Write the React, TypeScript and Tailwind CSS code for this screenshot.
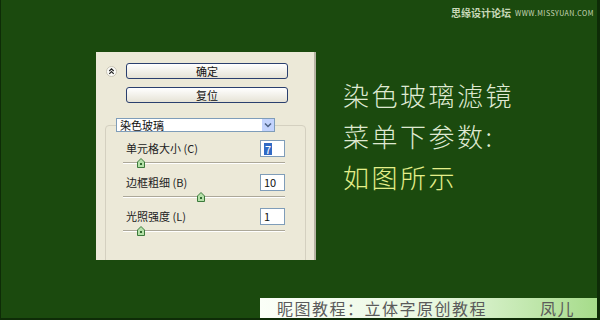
import React from "react"

const cjk = { fontFamily: '"Noto Sans CJK SC", "Noto Sans", sans-serif' }

function Slider({ pos }: { pos: number }) {
  return (
    <div className="relative h-[17px] pl-[17px] pr-[20px]">
      <div className="mt-[5px] h-[2px] border-t border-[#aca899] border-b border-b-white" />
      <svg
        className="absolute top-[1px]"
        style={{ left: 17 + pos - 4 }}
        width="8"
        height="10"
        viewBox="0 0 8 10"
      >
        <polygon points="4,0.5 7.5,4 7.5,9.5 0.5,9.5 0.5,4" fill="#b4e0a8" stroke="#3c7a3c" strokeWidth="1" />
        <rect x="3" y="5" width="2" height="2" fill="#2f6a2f" />
      </svg>
    </div>
  )
}

function ParamRow({ label, value, pos, selected }: { label: string; value: string; pos: number; selected?: boolean }) {
  return (
    <div className="flex flex-col">
      <div className="flex h-[17px] items-center justify-between pl-[20px] pr-[20px]">
        <span className="text-[11px] leading-none text-[#222]">{label}</span>
        <div className="flex h-[17px] w-[25px] items-center border border-[#7f9db9] bg-white pl-[3px]">
          {selected ? (
            <span className="bg-[#316ac5] px-[1px] text-[11px] leading-[12px] text-white">{value}</span>
          ) : (
            <span className="text-[11px] leading-none text-[#111]">{value}</span>
          )}
        </div>
      </div>
      <Slider pos={pos} />
    </div>
  )
}

function XpButton({ text }: { text: string }) {
  return (
    <div className="flex h-[16px] w-[162px] items-center justify-center rounded-[3px] border border-[#2a3f6e] bg-gradient-to-b from-white to-[#e6e3d6] text-[11px] leading-none text-[#111]">
      {text}
    </div>
  )
}

function Dialog() {
  return (
    <div className="flex h-[208px] w-[220px] flex-col overflow-hidden" style={cjk}>
      <div className="h-[5px] bg-gradient-to-b from-[#3d7bf0] to-[#1c56d0]" />
      <div className="flex-1 border-r-2 border-[#b7b4a4] bg-[#ece9d8]">
        <div className="mt-[11px] flex items-center pl-[10px]">
          <svg width="11" height="11" viewBox="0 0 11 11" className="mr-[9px]">
            <circle cx="5.5" cy="5.5" r="5" fill="#fbfbf7" stroke="#c8c4b4" />
            <path d="M3.3 5 L5.5 2.8 L7.7 5 M3.3 7.8 L5.5 5.6 L7.7 7.8" fill="none" stroke="#222" strokeWidth="1.2" />
          </svg>
          <XpButton text="确定" />
        </div>
        <div className="ml-[30px] mt-[8px]">
          <XpButton text="复位" />
        </div>
        <fieldset className="ml-[9px] mt-[15px] h-[160px] w-[201px] rounded-[4px] border border-[#d4d0c0]">
          <legend className="ml-[10px] p-0">
            <div className="flex h-[14px] w-[159px] items-center justify-between border border-[#7f9db9] bg-white">
              <span className="pl-[3px] text-[11px] leading-none text-[#111]">染色玻璃</span>
              <div className="flex h-[12px] w-[12px] items-center justify-center bg-[#c3d3fd]">
                <svg width="8" height="6" viewBox="0 0 8 6">
                  <path d="M1 1.5 L4 4.5 L7 1.5" fill="none" stroke="#4d6185" strokeWidth="1.5" />
                </svg>
              </div>
            </div>
          </legend>
          <div className="mt-[8px] flex flex-col">
            <ParamRow label="单元格大小 (C)" value="7" pos={18} selected />
            <ParamRow label="边框粗细 (B)" value="10" pos={78} />
            <ParamRow label="光照强度 (L)" value="1" pos={18} />
          </div>
        </fieldset>
      </div>
    </div>
  )
}

export default function App() {
  return (
    <div
      className="relative flex h-[320px] w-[600px] flex-col overflow-hidden border-b-2 border-l border-r-[3px] border-[#0e2c07] bg-[#1b4a0e]"
      style={cjk}
    >
      <div className="absolute right-[3px] top-[8px] flex items-center gap-[4px] text-[#c9d9b9]">
        <span className="text-[10px] font-bold leading-none">思缘设计论坛</span>
        <span className="text-[7px] leading-none tracking-[0.5px]">WWW.MISSYUAN.COM</span>
      </div>
      <div className="flex pl-[95px] pt-[52px]">
        <Dialog />
        <div className="ml-[27px] mt-[22px] flex flex-col text-[26px] font-light leading-[41px] tracking-[2.5px]">
          <span className="text-[#dfe9d2]">染色玻璃滤镜</span>
          <span className="text-[#dfe9d2]">菜单下参数:</span>
          <span className="text-[#e4ef8a]">如图所示</span>
        </div>
      </div>
      <div className="mt-auto ml-[259px] flex h-[20px] items-center bg-gradient-to-r from-[#fbfff8] via-[#eaf8e2] to-[#a6dc8a] pl-[17px] pr-[22px] text-[16px] leading-none text-[#5a5a5a]">
        <span className="tracking-[1.5px]">昵图教程：立体字原创教程</span>
        <span className="ml-auto tracking-[1.5px]">凤儿</span>
      </div>
    </div>
  )
}
